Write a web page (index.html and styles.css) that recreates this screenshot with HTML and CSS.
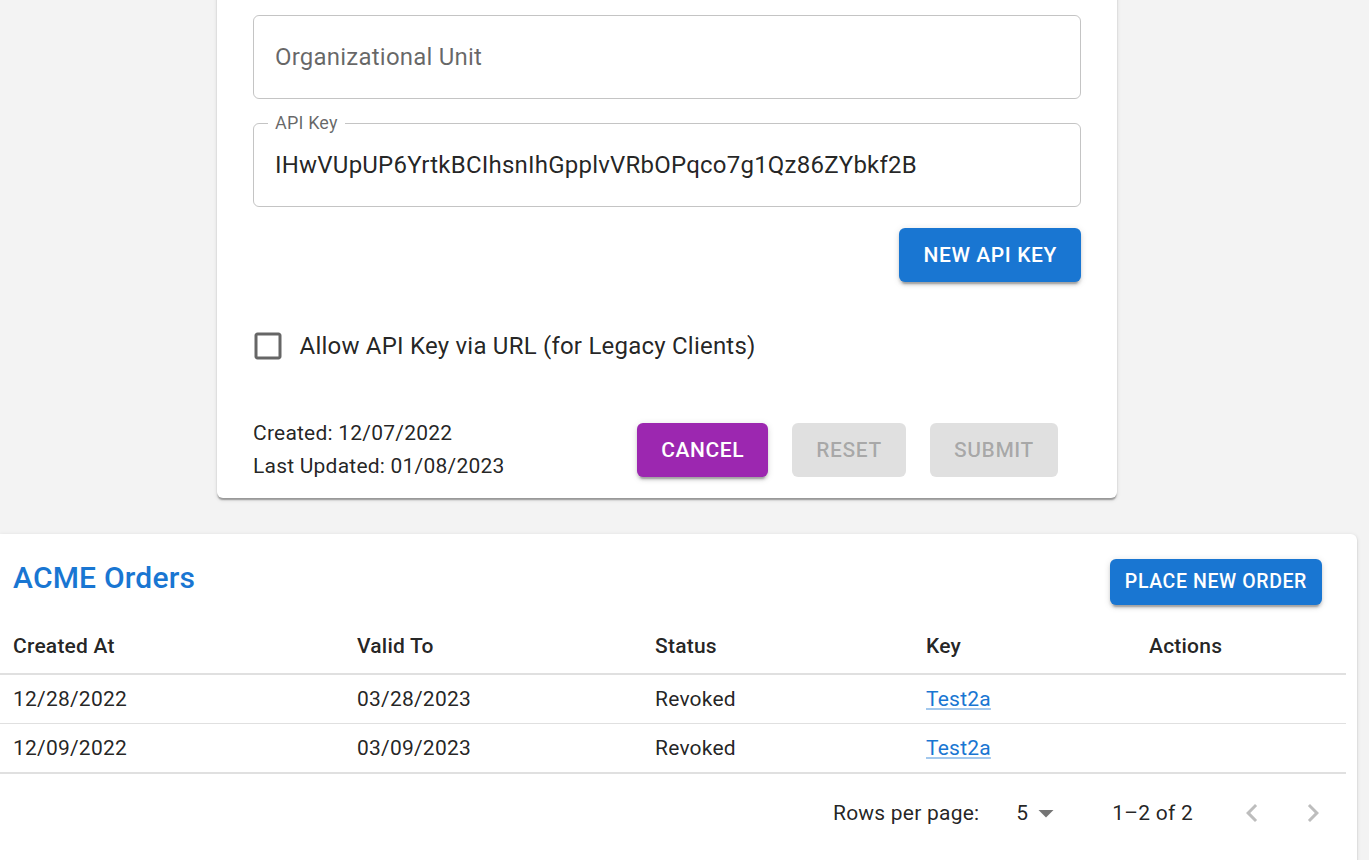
FILE: index.html
```html
<!DOCTYPE html>
<html lang="en">
<head>
<meta charset="utf-8">
<title>Client</title>
<link rel="stylesheet" href="styles.css">
</head>
<body>
<div class="page">
  <section class="form-card">
    <div class="field">
      <span class="placeholder">Organizational Unit</span>
    </div>
    <div class="field">
      <span class="field-label">API Key</span>
      <span class="field-value">IHwVUpUP6YrtkBCIhsnIhGpplvVRbOPqco7g1Qz86ZYbkf2B</span>
    </div>
    <div class="key-actions">
      <button class="btn btn-primary">New API Key</button>
    </div>
    <label class="check-row">
      <span class="check">
        <svg viewBox="0 0 24 24" width="36" height="36"><path d="M19 5v14H5V5h14m0-2H5c-1.11 0-2 .9-2 2v14c0 1.1.89 2 2 2h14c1.1 0 2-.9 2-2V5c0-1.1-.9-2-2-2z"/></svg>
      </span>
      <span class="check-label">Allow API Key via URL (for Legacy Clients)</span>
    </label>
    <div class="form-footer">
      <div class="meta">
        <div>Created: 12/07/2022</div>
        <div>Last Updated: 01/08/2023</div>
      </div>
      <div class="footer-buttons">
        <button class="btn btn-secondary">Cancel</button>
        <button class="btn btn-disabled" disabled>Reset</button>
        <button class="btn btn-disabled" disabled>Submit</button>
      </div>
    </div>
  </section>

  <section class="orders-card">
    <div class="orders-head">
      <h2 class="orders-title">ACME Orders</h2>
      <button class="btn btn-primary btn-small">Place New Order</button>
    </div>
    <table class="orders-table">
      <thead>
        <tr>
          <th class="c1">Created At</th>
          <th class="c2">Valid To</th>
          <th class="c3">Status</th>
          <th class="c4">Key</th>
          <th class="c5">Actions</th>
        </tr>
      </thead>
      <tbody>
        <tr>
          <td>12/28/2022</td>
          <td>03/28/2023</td>
          <td>Revoked</td>
          <td><a href="#" class="key-link">Test2a</a></td>
          <td></td>
        </tr>
        <tr class="last">
          <td>12/09/2022</td>
          <td>03/09/2023</td>
          <td>Revoked</td>
          <td><a href="#" class="key-link">Test2a</a></td>
          <td></td>
        </tr>
      </tbody>
    </table>
    <div class="pagination">
      <span class="rows-label">Rows per page:</span>
      <span class="rows-select">
        <span>5</span>
        <svg viewBox="0 0 24 24" width="36" height="36"><path d="M7 10l5 5 5-5z"/></svg>
      </span>
      <span class="range">1–2 of 2</span>
      <span class="page-actions">
        <span class="page-btn"><svg viewBox="0 0 24 24" width="36" height="36"><path d="M15.41 16.59 10.83 12l4.58-4.59L14 6l-6 6 6 6 1.41-1.41z"/></svg></span>
        <span class="page-btn"><svg viewBox="0 0 24 24" width="36" height="36"><path d="M8.59 16.59 13.17 12 8.59 7.41 10 6l6 6-6 6-1.41-1.41z"/></svg></span>
      </span>
    </div>
  </section>
</div>
</body>
</html>
```
FILE: styles.css
```css
* {
  box-sizing: border-box;
}

body {
  margin: 0;
  background: #f3f3f3;
  font-family: Roboto, "Noto Sans", sans-serif;
  color: rgba(0, 0, 0, 0.87);
}

.page {
  width: 1369px;
}

/* ---------- form card ---------- */
.form-card {
  width: 900px;
  margin: -10px 0 0 217px;
  padding: 25px 36px 15px;
  background: #fff;
  border-radius: 0 0 6px 6px;
  box-shadow: 0 3px 1.5px -1.5px rgba(0, 0, 0, 0.2),
              0 1.5px 1.5px 0 rgba(0, 0, 0, 0.14),
              0 1.5px 4.5px 0 rgba(0, 0, 0, 0.12);
}

.field {
  position: relative;
  height: 84px;
  border: 1px solid rgba(0, 0, 0, 0.23);
  border-radius: 6px;
  padding: 0 21px;
  display: flex;
  align-items: center;
  font-size: 24px;
  letter-spacing: 0.22px;
}

.field + .field {
  margin-top: 24px;
}

.placeholder {
  color: rgba(0, 0, 0, 0.6);
}

.field-value {
  color: rgba(0, 0, 0, 0.87);
}

.field-label {
  position: absolute;
  left: 14px;
  top: -13px;
  padding: 0 7px;
  background: #fff;
  font-size: 18px;
  line-height: 24px;
  letter-spacing: 0.17px;
  color: rgba(0, 0, 0, 0.6);
}

.key-actions {
  margin-top: 21px;
  display: flex;
  justify-content: flex-end;
}

.btn {
  font-family: Roboto, "Noto Sans", sans-serif;
  font-weight: 500;
  font-size: 21px;
  letter-spacing: 0.6px;
  text-transform: uppercase;
  line-height: 36px;
  padding: 9px 24px;
  border: 0;
  border-radius: 6px;
  cursor: pointer;
  color: #fff;
  box-shadow: 0 4.5px 1.5px -3px rgba(0, 0, 0, 0.2),
              0 3px 3px 0 rgba(0, 0, 0, 0.14),
              0 1.5px 7.5px 0 rgba(0, 0, 0, 0.12);
}

.btn-primary {
  background: #1976d2;
}

.btn-secondary {
  background: #9c27b0;
}

.btn-disabled {
  background: rgba(0, 0, 0, 0.12);
  color: rgba(0, 0, 0, 0.26);
  box-shadow: none;
  cursor: default;
}

.check-row {
  margin: 32px 0 0 -16.5px;
  display: flex;
  align-items: center;
  font-size: 24px;
  letter-spacing: 0.22px;
}

.check {
  display: flex;
  padding: 13.5px;
}

.check svg {
  fill: rgba(0, 0, 0, 0.6);
}

.form-footer {
  margin-top: 40px;
  display: flex;
  justify-content: space-between;
  align-items: center;
}

.meta {
  font-size: 21px;
  line-height: 33px;
  letter-spacing: 0.22px;
}

.footer-buttons {
  display: flex;
  gap: 24px;
  padding-right: 23px;
}

/* ---------- orders card ---------- */
.orders-card {
  margin-top: 36px;
  width: 1357px;
  padding: 0 11px 20px 0;
  background: #fff;
  border-radius: 0 6px 0 0;
  box-shadow: 0 3px 1.5px -1.5px rgba(0, 0, 0, 0.2),
              0 1.5px 1.5px 0 rgba(0, 0, 0, 0.14),
              0 1.5px 4.5px 0 rgba(0, 0, 0, 0.12);
}

.orders-head {
  height: 90px;
  padding: 0 24px 0 13px;
  display: flex;
  justify-content: space-between;
  align-items: flex-start;
}

.orders-title {
  margin: 20px 0 0;
  font-size: 30px;
  font-weight: 500;
  line-height: 48px;
  letter-spacing: 0.2px;
  color: #1976d2;
}

.btn-small {
  margin-top: 25px;
  font-size: 19.5px;
  line-height: 34px;
  padding: 6px 15px;
  letter-spacing: 0.6px;
}

.orders-table {
  width: 1346px;
  border-collapse: collapse;
  font-size: 21px;
  letter-spacing: 0.22px;
}

.orders-table th,
.orders-table td {
  text-align: left;
  padding: 9px 13px;
  line-height: 30px;
  border-bottom: 1px solid #e0e0e0;
}

.orders-table th {
  font-weight: 500;
  border-bottom-width: 2px;
  padding-top: 7px;
  padding-bottom: 12px;
}

.orders-table tr.last td {
  border-bottom-width: 2px;
}

.c1 { width: 344px; }
.c2 { width: 298px; }
.c3 { width: 271px; }
.c4 { width: 223px; }
.c5 { width: 210px; }

.key-link {
  color: #1976d2;
  text-decoration: underline;
  text-decoration-color: rgba(25, 118, 210, 0.4);
}

.pagination {
  width: 1346px;
  height: 78px;
  padding-right: 3px;
  display: flex;
  justify-content: flex-end;
  align-items: center;
  font-size: 21px;
  letter-spacing: 0.22px;
}

.rows-select {
  margin-left: 37px;
  display: flex;
  align-items: center;
}

.rows-select svg {
  fill: rgba(0, 0, 0, 0.54);
}

.range {
  margin-left: 48px;
}

.page-actions {
  margin-left: 29px;
  display: flex;
  gap: 1px;
}

.page-btn {
  display: flex;
  padding: 12px;
}

.page-btn svg {
  fill: rgba(0, 0, 0, 0.26);
}
```
